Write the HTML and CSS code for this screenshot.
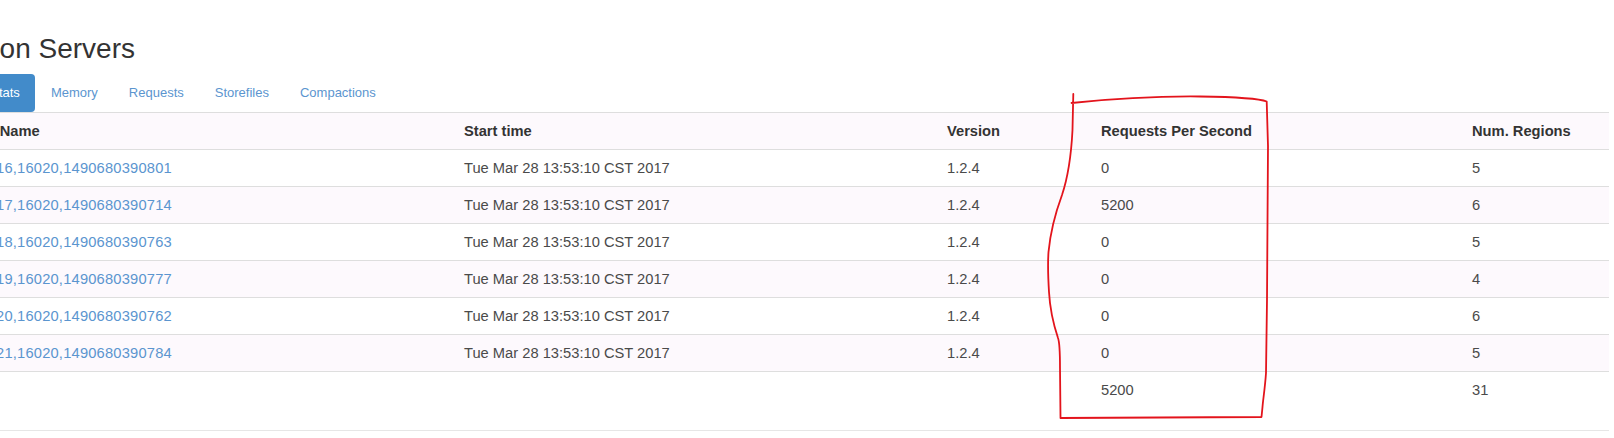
FILE: index.html
```html
<!DOCTYPE html>
<html lang="en">
<head>
<meta charset="utf-8">
<title>Region Servers</title>
<link rel="stylesheet" href="styles.css">
</head>
<body>
<div class="page">
  <section class="container">
    <h2 class="title">Region Servers</h2>
    <ul class="nav-pills">
      <li class="active"><a href="#">Base Stats</a></li>
      <li><a href="#">Memory</a></li>
      <li><a href="#">Requests</a></li>
      <li><a href="#">Storefiles</a></li>
      <li><a href="#">Compactions</a></li>
    </ul>
    <table class="servers">
      <colgroup>
        <col class="c-name"><col class="c-start"><col class="c-ver"><col class="c-rps"><col class="c-reg">
      </colgroup>
      <thead>
        <tr><th>ServerName</th><th>Start time</th><th>Version</th><th>Requests Per Second</th><th>Num. Regions</th></tr>
      </thead>
      <tbody>
        <tr><td><a href="#">server16,16020,1490680390801</a></td><td>Tue Mar 28 13:53:10 CST 2017</td><td>1.2.4</td><td>0</td><td>5</td></tr>
        <tr><td><a href="#">server17,16020,1490680390714</a></td><td>Tue Mar 28 13:53:10 CST 2017</td><td>1.2.4</td><td>5200</td><td>6</td></tr>
        <tr><td><a href="#">server18,16020,1490680390763</a></td><td>Tue Mar 28 13:53:10 CST 2017</td><td>1.2.4</td><td>0</td><td>5</td></tr>
        <tr><td><a href="#">server19,16020,1490680390777</a></td><td>Tue Mar 28 13:53:10 CST 2017</td><td>1.2.4</td><td>0</td><td>4</td></tr>
        <tr><td><a href="#">server20,16020,1490680390762</a></td><td>Tue Mar 28 13:53:10 CST 2017</td><td>1.2.4</td><td>0</td><td>6</td></tr>
        <tr><td><a href="#">server21,16020,1490680390784</a></td><td>Tue Mar 28 13:53:10 CST 2017</td><td>1.2.4</td><td>0</td><td>5</td></tr>
        <tr class="total"><td></td><td></td><td></td><td>5200</td><td>31</td></tr>
      </tbody>
    </table>
  </section>
  <svg class="annotation" width="1614" height="438" viewBox="0 0 1614 438" aria-hidden="true">
    <path d="M1071.5,103 C1110,99 1150,96 1200,96.5 C1235,97 1258,98 1266.7,101.5 L1268,146 L1267,300 L1266,373 C1265,388 1263,400 1262.5,407 L1261.5,417 L1160,417.5 L1060.5,418 L1060,368 C1060,352 1059.5,342 1058,338 C1054,326 1050,310 1049,292 C1048,276 1047.8,262 1048.5,252 C1050,236 1055,214 1062,195 C1067,180 1071,160 1072.5,130 L1073.3,94" />
  </svg>
</div>
</body>
</html>
```
FILE: styles.css
```css
html, body {
  margin: 0;
  padding: 0;
  background: #fff;
  overflow: hidden;
}

body {
  font-family: "Liberation Sans", Arial, sans-serif;
  color: #333;
  width: 1614px;
  height: 438px;
}

.page {
  position: relative;
  width: 1614px;
  height: 438px;
  display: flow-root;
}

.container {
  margin-left: -58px;
  padding-top: 34px;
  width: 1667px;
}

.title {
  margin: 0 0 10px;
  font-size: 28px;
  line-height: 30px;
  font-weight: 400;
  color: #333;
}

.nav-pills {
  list-style: none;
  margin: 0;
  padding: 0;
  display: flex;
  gap: 1px;
}

.nav-pills a {
  display: block;
  padding: 9px 15px;
  font-size: 13px;
  line-height: 20px;
  color: #5b95cf;
  text-decoration: none;
  border-radius: 4px;
}

.nav-pills .active a {
  background: #428bca;
  color: #fff;
}

.servers {
  width: 1667px;
  border-collapse: collapse;
  table-layout: fixed;
  font-size: 14.7px;
  line-height: 20px;
}

.c-name { width: 514px; }
.c-start { width: 483px; }
.c-ver { width: 154px; }
.c-rps { width: 371px; }
.c-reg { width: 145px; }

.servers th,
.servers td {
  padding: 8px;
  text-align: left;
  border-top: 1px solid #dedede;
  white-space: nowrap;
  overflow: hidden;
}

.servers th:first-child,
.servers td:first-child {
  padding-left: 12px;
}

.servers th {
  font-weight: 700;
  color: #333;
}

.servers td {
  color: #4a4a4a;
}

.servers thead tr,
.servers tbody tr:nth-child(even) {
  background: #fdf9fd;
}

.servers a {
  color: #5b95cf;
  text-decoration: none;
  letter-spacing: 0.2px;
}

.servers .total td {
  padding-bottom: 30px;
  border-bottom: 1px solid #e6e6e6;
}

.annotation {
  position: absolute;
  left: 0;
  top: 0;
  pointer-events: none;
}

.annotation path {
  fill: none;
  stroke: #e3141c;
  stroke-width: 1.8;
  stroke-linejoin: round;
  stroke-linecap: round;
}
```
